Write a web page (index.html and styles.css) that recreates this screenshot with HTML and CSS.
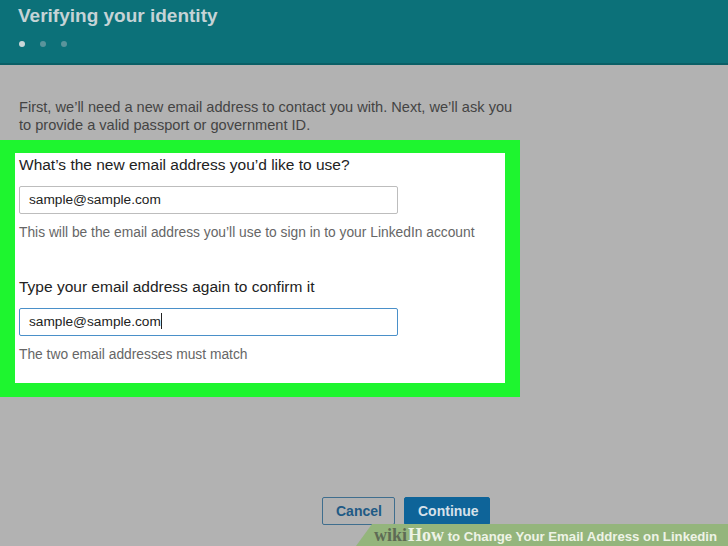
FILE: index.html
```html
<!DOCTYPE html>
<html lang="en">
<head>
  <meta charset="UTF-8" />
  <title>Verifying your identity</title>
  <link rel="stylesheet" href="styles.css">
</head>
<body>
  <div class="verify-header">
    <h1>Verifying your identity</h1>
    <div class="step-dots">
      <span class="dot active"></span>
      <span class="dot"></span>
      <span class="dot"></span>
    </div>
  </div>

  <div class="verify-body">
    <p class="intro">First, we’ll need a new email address to contact you with. Next, we’ll ask you to provide a valid passport or government ID.</p>

    <div class="highlight">
      <div class="form-box">
        <label class="field-label">What’s the new email address you’d like to use?</label>
        <div class="field-input">sample@sample.com</div>
        <p class="field-help">This will be the email address you’ll use to sign in to your LinkedIn account</p>

        <label class="field-label second">Type your email address again to confirm it</label>
        <div class="field-input focused">sample@sample.com<span class="caret"></span></div>
        <p class="field-help">The two email addresses must match</p>
      </div>
    </div>

    <div class="actions">
      <button class="btn btn-cancel">Cancel</button>
      <button class="btn btn-continue">Continue</button>
    </div>
  </div>

  <div class="wikihow-tag">
    <span class="wiki">wiki</span><span class="how">How</span> to Change Your Email Address on Linkedin
  </div>
</body>
</html>
```

FILE: styles.css
```css
html, body {
margin: 0;
padding: 0;
}

body {
width: 728px;
height: 546px;
overflow: hidden;
background-color: #b2b2b2;
font-family: "Liberation Sans", Arial, sans-serif;
position: relative;
}

.verify-header {
height: 65px;
background-color: #0c7179;
border-bottom: 2px solid #0a5f66;
padding: 0 18px;
box-sizing: border-box;
}

.verify-header h1 {
margin: 0;
padding-top: 5px;
font-size: 19px;
font-weight: bold;
color: #c5d3d6;
}

.step-dots {
display: flex;
gap: 15px;
margin-top: 14px;
padding-left: 1px;
}

.dot {
width: 6px;
height: 6px;
border-radius: 50%;
background-color: #5a949b;
}

.dot.active {
background-color: #c9d6d8;
}

.verify-body {
padding-top: 33px;
}

.intro {
margin: 0 0 6px 19px;
width: 500px;
font-size: 14.6px;
line-height: 18px;
color: #444;
}

.highlight {
width: 520px;
box-sizing: border-box;
background-color: #1ef52f;
padding: 13px 15px 14px 15px;
}

.form-box {
background-color: #fff;
height: 230px;
padding: 3px 4px 0 4px;
box-sizing: border-box;
}

.field-label {
display: block;
font-size: 15.5px;
line-height: 18px;
color: #222;
}

.field-label.second {
margin-top: 37px;
}

.field-input {
margin-top: 12px;
width: 379px;
height: 28px;
box-sizing: border-box;
border: 1px solid #bdbdbd;
border-radius: 2px;
padding: 0 9px;
font-size: 13.7px;
line-height: 26px;
color: #222;
}

.field-input.focused {
border-color: #4a90c9;
}

.caret {
display: inline-block;
width: 1px;
height: 16px;
background-color: #222;
vertical-align: -3px;
}

.field-help {
margin: 11px 0 0 0;
font-size: 13.8px;
line-height: 16px;
color: #666;
}

.actions {
display: flex;
gap: 9px;
margin: 100px 0 0 322px;
}

.btn {
height: 28px;
font-family: "Liberation Sans", Arial, sans-serif;
font-size: 14px;
font-weight: bold;
border-radius: 2px;
padding: 0 13px;
}

.btn-cancel {
background-color: #b2b2b2;
border: 1px solid #3f6e8e;
color: #1f5a85;
width: 73px;
}

.btn-continue {
background-color: #0e6499;
border: 1px solid #0e6499;
color: #d6e1ea;
width: 86px;
}

.wikihow-tag {
position: absolute;
right: 0;
bottom: 0;
width: 372px;
height: 22px;
background-color: #94b57c;
clip-path: polygon(16px 0, 100% 0, 100% 100%, 0 100%);
padding-left: 18px;
box-sizing: border-box;
font-size: 13.2px;
font-weight: bold;
line-height: 22px;
color: #eef3e6;
white-space: nowrap;
}

.wikihow-tag .wiki {
font-family: "Liberation Serif", "Times New Roman", serif;
font-size: 18px;
color: #5e6b55;
margin-right: 1px;
}

.wikihow-tag .how {
font-family: "Liberation Serif", "Times New Roman", serif;
font-size: 18px;
color: #eef3e6;
}
```
